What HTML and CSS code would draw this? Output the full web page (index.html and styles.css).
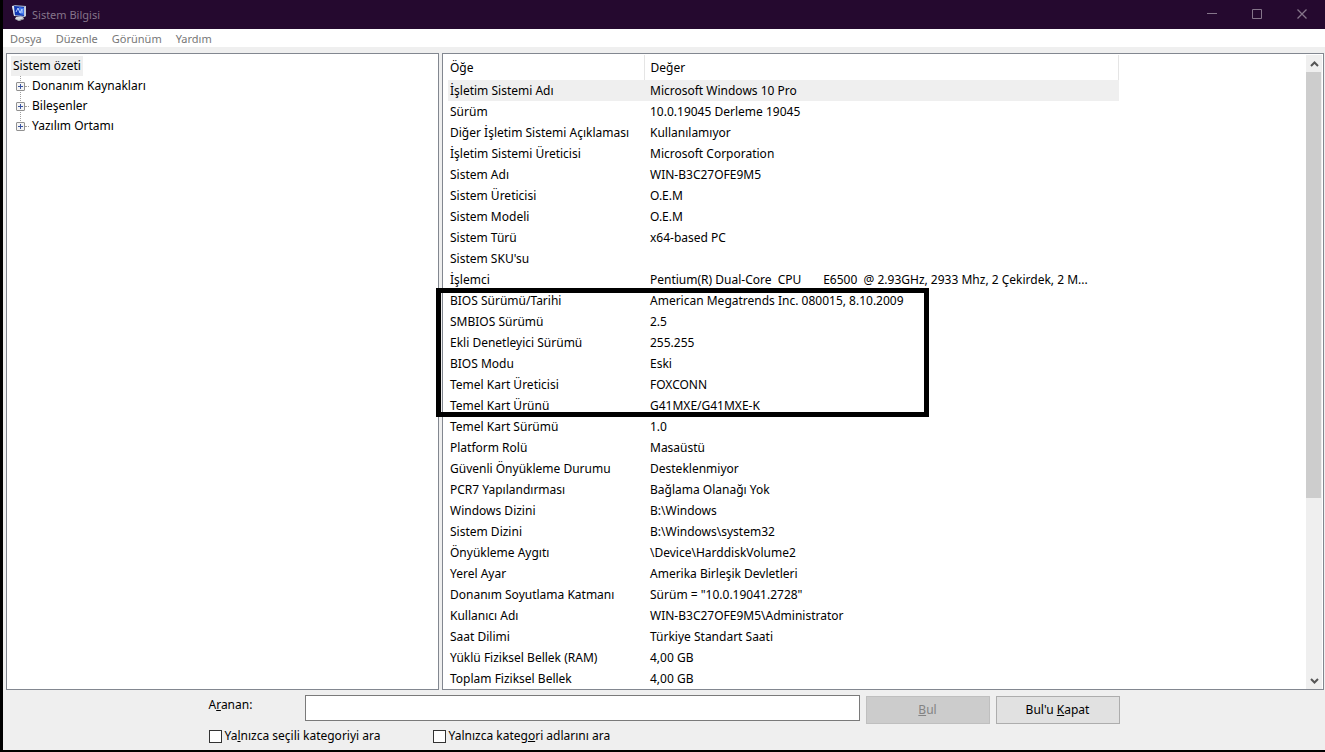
FILE: index.html
```html
<!DOCTYPE html>
<html lang="tr">
<head>
    <meta charset="UTF-8">
    <title>Sistem Bilgisi</title>
    <link rel="stylesheet" href="styles.css">
</head>
<body>
    <header>
        <svg class="logo" width="16" height="16" viewBox="0 0 16 16">
            <path d="M4 12l5-1 3 2v1l-5 2-4-2z" fill="#d8dbe0"/>
            <path d="M3 14l4 2 5-2v-1l-5 2z" fill="#8d9098"/>
            <path d="M0 1l3-1 11 1v10l-2 1-10-1z" fill="#9aa6c0"/>
            <path d="M0 1l2 0 1 10-1 0z" fill="#dfe6f2"/>
            <path d="M2 1l10 1v9l-9-1z" fill="#1238b4"/>
            <path d="M7 2l5 1v7l-4-1z" fill="#3f74ea"/>
            <path d="M4 7l2-4 2 5 2-4v4" stroke="#b9d2ff" fill="none"/>
            <path d="M12 2l2-1v10l-2 1z" fill="#c3cbdb"/>
        </svg>
        <h1>Sistem Bilgisi</h1>
        <div class="window-buttons">
            <button type="button" aria-label="Simge durumuna küçült"><svg width="11" height="11"><path d="M0 4.500h10"/></svg></button>
            <button type="button" aria-label="Ekranı kapla"><svg width="11" height="11"><path d="M.5 .5h9v9h-9z"/></svg></button>
            <button type="button" aria-label="Kapat"><svg width="11" height="11"><path d="M.5 .5l9 9M9.500 .5l-9 9" stroke-width="1.300"/></svg></button>
        </div>
    </header>

    <nav class="menu">
        <a href="#">Dosya</a>
        <a href="#">Düzenle</a>
        <a href="#">Görünüm</a>
        <a href="#">Yardım</a>
    </nav>

    <main>
        <section class="tree">
            <a class="root" href="#">Sistem özeti</a>
            <ul>
                <li><button type="button" aria-label="Genişlet"></button><a href="#">Donanım Kaynakları</a></li>
                <li><button type="button" aria-label="Genişlet"></button><a href="#">Bileşenler</a></li>
                <li><button type="button" aria-label="Genişlet"></button><a href="#">Yazılım Ortamı</a></li>
            </ul>
        </section>

        <section class="details">
            <div class="list">
                <table>
                    <thead>
                        <tr><th class="item">Öğe</th><th>Değer</th></tr>
                    </thead>
                    <tbody>
                        <tr class="selected"><td>İşletim Sistemi Adı</td><td>Microsoft Windows 10 Pro</td></tr>
                        <tr><td>Sürüm</td><td>10.0.19045 Derleme 19045</td></tr>
                        <tr><td>Diğer İşletim Sistemi Açıklaması</td><td>Kullanılamıyor</td></tr>
                        <tr><td>İşletim Sistemi Üreticisi</td><td>Microsoft Corporation</td></tr>
                        <tr><td>Sistem Adı</td><td>WIN-B3C27OFE9M5</td></tr>
                        <tr><td>Sistem Üreticisi</td><td>O.E.M</td></tr>
                        <tr><td>Sistem Modeli</td><td>O.E.M</td></tr>
                        <tr><td>Sistem Türü</td><td>x64-based PC</td></tr>
                        <tr><td>Sistem SKU'su</td><td></td></tr>
                        <tr><td>İşlemci</td><td>Pentium(R) Dual-Core  CPU       E6500  @ 2.93GHz, 2933 Mhz, 2 Çekirdek, 2 M...</td></tr>
                        <tr><td>BIOS Sürümü/Tarihi</td><td>American Megatrends Inc. 080015, 8.10.2009</td></tr>
                        <tr><td>SMBIOS Sürümü</td><td>2.5</td></tr>
                        <tr><td>Ekli Denetleyici Sürümü</td><td>255.255</td></tr>
                        <tr><td>BIOS Modu</td><td>Eski</td></tr>
                        <tr><td>Temel Kart Üreticisi</td><td>FOXCONN</td></tr>
                        <tr><td>Temel Kart Ürünü</td><td>G41MXE/G41MXE-K</td></tr>
                        <tr><td>Temel Kart Sürümü</td><td>1.0</td></tr>
                        <tr><td>Platform Rolü</td><td>Masaüstü</td></tr>
                        <tr><td>Güvenli Önyükleme Durumu</td><td>Desteklenmiyor</td></tr>
                        <tr><td>PCR7 Yapılandırması</td><td>Bağlama Olanağı Yok</td></tr>
                        <tr><td>Windows Dizini</td><td>B:\Windows</td></tr>
                        <tr><td>Sistem Dizini</td><td>B:\Windows\system32</td></tr>
                        <tr><td>Önyükleme Aygıtı</td><td>\Device\HarddiskVolume2</td></tr>
                        <tr><td>Yerel Ayar</td><td>Amerika Birleşik Devletleri</td></tr>
                        <tr><td>Donanım Soyutlama Katmanı</td><td>Sürüm = "10.0.19041.2728"</td></tr>
                        <tr><td>Kullanıcı Adı</td><td>WIN-B3C27OFE9M5\Administrator</td></tr>
                        <tr><td>Saat Dilimi</td><td>Türkiye Standart Saati</td></tr>
                        <tr><td>Yüklü Fiziksel Bellek (RAM)</td><td>4,00 GB</td></tr>
                        <tr><td>Toplam Fiziksel Bellek</td><td>4,00 GB</td></tr>
                    </tbody>
                </table>
            </div>
            <div class="scrollbar">
                <button type="button" aria-label="Yukarı"><svg width="9" height="6"><path d="M1 5l3.500-3.500 3.500 3.500"/></svg></button>
                <div class="track"><div class="thumb"></div></div>
                <button type="button" aria-label="Aşağı"><svg width="9" height="6"><path d="M1 1l3.500 3.500 3.500-3.500"/></svg></button>
            </div>
            <div class="marker"></div>
        </section>
    </main>

    <form class="search">
        <div class="search-row">
            <label for="searchInput">A<u>r</u>anan:</label>
            <input type="text" id="searchInput">
            <button type="button" disabled><u>B</u>ul</button>
            <button type="button">Bul'u <u>K</u>apat</button>
        </div>
        <div class="options">
            <label><input type="checkbox"><span>Ya<u>l</u>nızca seçili kategoriyi ara</span></label>
            <label><input type="checkbox"><span>Yalnızca kateg<u>o</u>ri adlarını ara</span></label>
        </div>
    </form>
</body>
</html>
```
FILE: styles.css
```css
* {
    box-sizing: border-box;
}

body {
    display: flex;
    flex-direction: column;
    min-height: 100vh;
    margin: 0;
    border-left: 3px solid #000;
    border-bottom: 2px solid #000;
    background-color: #efefef;
    color: #000;
    font-family: "Noto Sans", "Open Sans", sans-serif;
    font-size: 12px;
    line-height: 20px;
}

button,
input {
    margin: 0;
    padding: 0;
    font: inherit;
}

a {
    color: inherit;
    text-decoration: none;
}

svg {
    display: block;
    fill: none;
}

/* Title bar */
header {
    display: flex;
    align-items: center;
    height: 29px;
    padding-left: 9px;
    background-color: #25092f;
    color: #85758a;
}

.logo {
    margin-bottom: 3px;
}

header h1 {
    margin: 0 0 0 4px;
    font-size: 11px;
    font-weight: normal;
}

.window-buttons {
    display: flex;
    margin-left: auto;
}

.window-buttons button {
    display: flex;
    align-items: center;
    justify-content: center;
    width: 45px;
    height: 27px;
    border: none;
    background: none;
}

.window-buttons path {
    stroke: #85758a;
}

.menu {
    display: flex;
    gap: 14px;
    height: 18px;
    padding-left: 7px;
    background-color: #fff;
    color: #777;
    font-size: 11px;
}

main {
    display: grid;
    flex: 1;
    grid-template-columns: 433fr 882fr;
    gap: 3px;
    padding: 6px 1px 0 3px;
}

.tree,
.details {
    border: 1px solid #828790;
    background-color: #fff;
}

/* Category tree */
.tree {
    padding: 2px 4px;
}

.tree .root {
    display: inline-block;
    padding: 0 2px;
    background-color: #efefef;
}

.tree ul {
    margin: 0 0 0 9px;
    padding: 0;
    list-style: none;
    background: repeating-linear-gradient(#a0a0a0 0 1px, transparent 1px 2px) 0 0 / 1px 50px no-repeat;
}

.tree li {
    display: flex;
    align-items: center;
    height: 20px;
}

.tree li button {
    width: 9px;
    height: 9px;
    margin-left: -4px;
    border: 1px solid #919191;
    border-radius: 1px;
    background:
        linear-gradient(#3a55a0, #3a55a0) center / 5px 1px no-repeat,
        linear-gradient(#3a55a0, #3a55a0) center / 1px 5px no-repeat,
        #f4f4f4;
}

.tree li::before {
    content: "";
    order: 1;
    width: 4px;
    border-top: 1px dotted #a0a0a0;
}

.tree li a {
    order: 2;
    padding-left: 3px;
}

/* Item list */
.details {
    display: flex;
    position: relative;
    min-width: 0;
    padding: 1px 1px 0 5px;
}

.list {
    flex: 1;
    min-width: 0;
    overflow: hidden;
}

table {
    width: 671px;
    border-collapse: collapse;
    table-layout: fixed;
}

th,
td {
    height: 21px;
    padding: 0 0 0 2px;
    line-height: 21px;
    text-align: left;
    font-weight: normal;
    white-space: pre;
}

th {
    height: 25px;
    border-right: 1px solid #e5e5e5;
}

th + th,
td + td {
    padding-left: 6px;
}

.item {
    width: 196px;
}

.selected {
    background-color: #efefef;
}

.scrollbar {
    display: flex;
    flex-direction: column;
    width: 16px;
    background-color: #efefef;
}

.scrollbar button {
    display: flex;
    align-items: center;
    justify-content: center;
    width: 16px;
    height: 17px;
    border: none;
    background: none;
}

.scrollbar path {
    stroke: #555;
    stroke-width: 2;
}

.track {
    flex: 1;
}

.thumb {
    width: 15px;
    height: 71%;
    background-color: #cdcdcd;
}

/* Frame drawn over the BIOS and board rows */
.marker {
    position: absolute;
    top: 234px;
    left: -7px;
    width: 493px;
    height: 129px;
    border: 5px solid #000;
    pointer-events: none;
}

/* Search area */
.search {
    width: 100%;
    max-width: 911px;
    height: 60px;
    margin: 0 auto;
    padding-top: 5px;
}

.search-row {
    display: flex;
    gap: 6px;
}

.search-row label {
    width: 90px;
}

.search-row input {
    flex: 1;
    min-width: 0;
    height: 26px;
    padding: 0 4px;
    border: 1px solid #7a7a7a;
    background-color: #fff;
}

.search-row button {
    width: 124px;
    height: 28px;
    margin-top: 1px;
    border: 1px solid #adadad;
    background-color: #e1e1e1;
    color: #000;
}

.search-row button:disabled {
    border-color: #bfbfbf;
    background-color: #ccc;
    color: #838383;
}

.options {
    display: flex;
    margin-top: 2px;
}

.options label {
    display: flex;
    align-items: center;
    gap: 3px;
    width: 224px;
}

.options input {
    appearance: none;
    width: 13px;
    height: 13px;
    border: 1px solid #333;
    background-color: #fff;
}
```
